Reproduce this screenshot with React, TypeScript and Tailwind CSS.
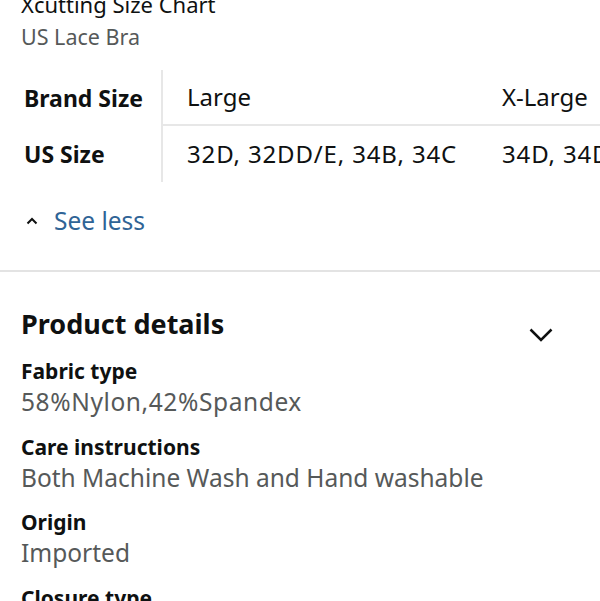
const details = [
  { label: "Fabric type", value: "58%Nylon,42%Spandex", wide: true },
  { label: "Care instructions", value: "Both Machine Wash and Hand washable" },
  { label: "Origin", value: "Imported" },
  { label: "Closure type", value: "Hook and Eye" },
];

const App = () => {
  return (
    <div
      className="w-[600px] h-[601px] overflow-hidden bg-white text-[#0f1111]"
      style={{ fontFamily: '"Noto Sans", "Open Sans", sans-serif' }}
    >
      {/* Size chart */}
      <div className="-mt-[11px] px-[21px]">
        <div className="text-[22px] leading-[30px]">Xcutting Size Chart</div>
        <div className="text-[21.5px] leading-[36px] text-[#565959]">US Lace Bra</div>
      </div>

      <div className="mt-[15px] flex overflow-hidden whitespace-nowrap">
        <div className="w-[163px] shrink-0 border-r-2 border-[#e7e7e7] pl-[24px] text-[23px] font-bold">
          <div className="h-[56px] flex items-center">Brand Size</div>
          <div className="h-[56px] flex items-center">US Size</div>
        </div>
        <div className="flex-1 text-[24px]">
          <div className="flex h-[56px] items-center border-b-2 border-[#e7e7e7]">
            <div className="w-[315px] shrink-0 pl-[24px]">Large</div>
            <div className="pl-[24px]">X-Large</div>
          </div>
          <div className="flex h-[56px] items-center tracking-[0.85px]">
            <div className="w-[315px] shrink-0 pl-[24px]">32D, 32DD/E, 34B, 34C</div>
            <div className="pl-[24px]">34D, 34DD/E, 36B, 36C</div>
          </div>
        </div>
      </div>

      <div className="mt-[20px] flex items-center gap-[16px] pl-[26px] h-[38px]">
        <svg width="12" height="8" viewBox="0 0 12 8" fill="none">
          <path d="M1.5 6.5 L6 2 L10.5 6.5" stroke="#0f1111" strokeWidth="2" />
        </svg>
        <span className="text-[24.5px] text-[#2f6496]">See less</span>
      </div>

      <div className="mt-[30px] h-[2px] bg-[#e3e3e3]" />

      {/* Product details */}
      <div className="px-[21px] pt-[34px]">
        <div className="flex items-center justify-between">
          <h2 className="text-[27px] font-bold leading-[36px]">Product details</h2>
          <svg className="mr-[26px] mt-[22px]" width="24" height="14" viewBox="0 0 24 14" fill="none">
            <path d="M1.5 1.5 L12 12 L22.5 1.5" stroke="#0f1111" strokeWidth="2.5" />
          </svg>
        </div>
        <div className="mt-[15px] flex flex-col gap-[14.5px]">
          {details.map((d) => (
            <div key={d.label}>
              <div className="text-[21px] font-bold leading-[28px]">{d.label}</div>
              <div className={`text-[24.5px] leading-[33px] text-[#565959] ${d.wide ? "tracking-[0.6px]" : ""}`}>
                {d.value}
              </div>
            </div>
          ))}
        </div>
      </div>
    </div>
  );
};

export default App;
